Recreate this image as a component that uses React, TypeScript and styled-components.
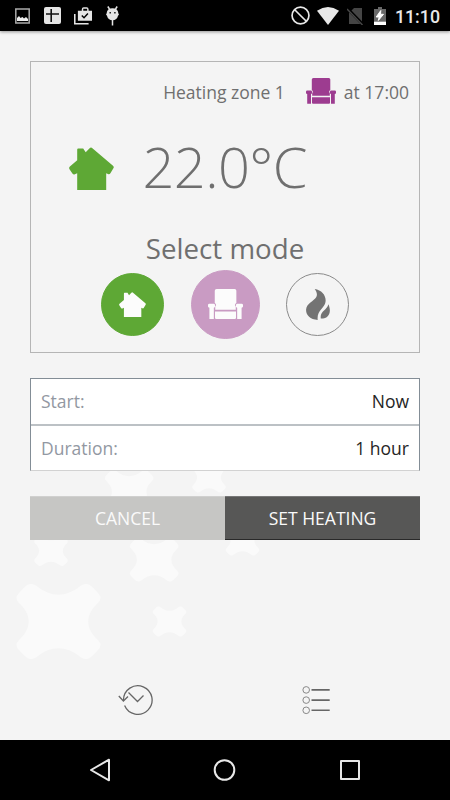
import React from 'react';
import styled, { createGlobalStyle } from 'styled-components';

const GlobalStyle = createGlobalStyle`
  * { box-sizing: border-box; }
  body { margin: 0; background: #f4f4f4; }
  svg { display: block; flex: none; }
  button { border: 0; padding: 0; margin: 0; font: inherit; background: none; }
`;

const Screen = styled.div`
  position: relative;
  isolation: isolate;
  width: 450px;
  height: 800px;
  overflow: hidden;
  display: flex;
  flex-direction: column;
  background: #f4f4f4;
  color: #6f6f6f;
  font-family: 'Open Sans', sans-serif;
`;

const Backdrop = styled.svg`
  position: absolute;
  inset: 0;
  z-index: -1;
`;

const StatusBar = styled.header`
  height: 31px;
  flex: none;
  display: flex;
  align-items: center;
  justify-content: space-between;
  padding: 0 10px 0 15px;
  background: #000;
  box-shadow: 0 1px 3px rgba(0, 0, 0, 0.4);
`;

const StatusGroup = styled.div<{ $gap: number }>`
  display: flex;
  align-items: center;
  gap: ${(p) => p.$gap}px;
`;

const Clock = styled.span`
  font: 500 17.8px/31px Roboto, sans-serif;
  color: #e8e8e8;
  padding-top: 2px;
  margin-left: -2px;
`;

const Content = styled.main`
  flex: 1;
  display: flex;
  flex-direction: column;
  padding: 30px 30px 0;
`;

const ZoneCard = styled.section`
  height: 292px;
  display: flex;
  flex-direction: column;
  border: 1px solid #b5b5b5;
`;

const ZoneHeader = styled.div`
  height: 59px;
  display: flex;
  align-items: center;
  justify-content: flex-end;
  padding-right: 10px;
  font-size: 17.5px;
  line-height: 24px;
`;

const HeaderIcon = styled.span`
  margin: -2px 8px 0 21px;
`;

const Reading = styled.div`
  height: 94px;
  display: flex;
  align-items: center;
  padding-left: 38px;
`;

const Temperature = styled.span`
  margin: -4px 0 0 28.5px;
  font-size: 56px;
  font-weight: 300;
  line-height: 76px;
  letter-spacing: -0.6px;
`;

const ModeTitle = styled.h2`
  margin: 13px 0 2px;
  height: 40px;
  text-align: center;
  font-size: 27.7px;
  font-weight: 400;
  line-height: 40px;
`;

const Modes = styled.div`
  display: flex;
  align-items: center;
  justify-content: center;
  gap: 26.5px;
`;

const ModeButton = styled.button<{ $size: number; $fill: string; $line?: string }>`
  width: ${(p) => p.$size}px;
  height: ${(p) => p.$size}px;
  display: flex;
  align-items: center;
  justify-content: center;
  border-radius: 50%;
  background: ${(p) => p.$fill};
  border: 1px solid ${(p) => p.$line ?? p.$fill};
`;

const Fields = styled.dl`
  height: 93px;
  margin: 25px 0 0;
  display: flex;
  flex-direction: column;
  background: #fff;
  border: 1px solid #838d96;
  border-bottom-color: #d2d2d2;
`;

const Field = styled.div`
  flex: 1;
  display: flex;
  align-items: center;
  justify-content: space-between;
  padding: 0 10px;
  font-size: 17.5px;
  line-height: 24px;

  & + & { border-top: 2px solid #bcc1c5; }
`;

const Label = styled.dt`
  color: #9298a2;
`;

const Value = styled.dd`
  margin: 0;
  color: #252525;
`;

const Actions = styled.div`
  height: 44px;
  margin-top: 25px;
  display: grid;
  grid-template-columns: 1fr 1fr;
`;

const ActionButton = styled.button<{ $primary?: boolean }>`
  font-size: 17.5px;
  line-height: 24px;
  color: #fafafa;
  background: ${(p) => (p.$primary ? '#575756' : '#c6c6c4')};
  border-top: 1px solid ${(p) => (p.$primary ? '#777' : '#d0d0cf')};
  border-bottom: 1px solid ${(p) => (p.$primary ? '#292929' : '#c6c6c4')};
`;

const Tabs = styled.nav`
  height: 80px;
  flex: none;
  display: flex;
  align-items: center;
  padding-left: 117.5px;
  gap: 149px;
`;

const SystemNav = styled.footer`
  height: 60px;
  flex: none;
  display: flex;
  align-items: center;
  justify-content: space-between;
  padding: 0 89px 0 87px;
  background: #000;
`;

const SPLASH =
  'M3 9Q10 1 13 .3Q17-.7 21 2.3C35 13.5 50 13.5 64 2.3Q68-.7 72 .3Q75 1 82 9Q87 14 82 19C69 31 69 44 82 56Q87 61 82 66Q75 74 72 74.7Q68 75.7 64 72.7C50 61.5 35 61.5 21 72.7Q17 75.7 13 74.7Q10 74 3 66Q-2 61 3 56C16 44 16 31 3 19Q-2 14 3 9Z';

const splashes = [
  { x: 16, y: 584, s: 1 },
  { x: 152.5, y: 606.5, s: 0.4 },
  { x: 129.5, y: 538, s: 0.58 },
  { x: 34, y: 536, s: 0.4 },
  { x: 225.5, y: 525.5, s: 0.4 },
  { x: 104.5, y: 470, s: 0.58 },
  { x: 192, y: 462.5, s: 0.4 },
];

const House = ({ width, color }: { width: number; color: string }) => (
  <svg width={width} height={(width * 43) / 45} viewBox="0 0 45 43" fill={color}>
    <path d="M8.2 2.4Q8.2 1.4 9.2 1.4H14.2L16.7 5.3L20.6 1.2Q22 0 23.4 1.2L44 18.7Q45.3 19.8 44.4 21.3L41.4 26.3Q40.5 27.8 39 27.1L37.2 26.2V43H8.2V26.2L5.9 27.3Q4.5 28 3.4 26.5L.5 22.2Q-.4 20.7.9 19.6L8.2 13.3Z" />
  </svg>
);

const Chair = ({ width, color }: { width: number; color: string }) => (
  <svg width={width} height={(width * 26) / 30} viewBox="0 0 30 26" fill={color}>
    <path d="M7.4 0H22.8Q24.3 0 24.3 1.5V12Q22.8 12.7 23.2 14.2L23.8 15V17.7H6.2V15L6.8 14.2Q7.2 12.7 5.8 12V1.5Q5.8 0 7.4 0Z" />
    <path d="M1.2 12.6H4.8Q6 12.6 6 13.7V15Q6 16 5 16V25.7H1.2V16Q0 16 0 15V13.7Q0 12.6 1.2 12.6ZM25.2 12.6H28.8Q30 12.6 30 13.7V15Q30 16 28.8 16V25.7H25V16Q24 16 24 15V13.7Q24 12.6 25.2 12.6Z" />
    <path d="M6 19.3H24V24.7Q24 25.7 23 25.7H7Q6 25.7 6 24.7Z" />
  </svg>
);

const Flame = () => (
  <svg width="24" height="32" viewBox="0 0 24 32" fill="#737373">
    <path d="M8.7 0C16 1 20.5 7 19.5 13C18.7 19 10.5 21.5 11.7 31C4 30.5-.2 26 .1 20.5C.4 14.5 8 12 10.3 8C11.8 5 10.3 2 8.7 0Z" />
    <path d="M22.4 15.3C24.5 20 24.6 25 21 27.9C19 29.5 16.5 29.6 14.8 29.5C13.7 22 21 21.5 22.4 15.3Z" />
  </svg>
);

export default function App() {
  return (
    <>
      <GlobalStyle />
      <Screen>
        <Backdrop width="450" height="800" fill="#fafafa">
          {splashes.map((p) => (
            <path key={`${p.x}-${p.y}`} d={SPLASH} transform={`translate(${p.x} ${p.y}) scale(${p.s})`} />
          ))}
        </Backdrop>

        <StatusBar>
          <StatusGroup $gap={13.5}>
            <svg width="15" height="16" viewBox="0 0 15 16">
              <path d="M.8 1H14.2V15H.8Z" fill="none" stroke="#aaa" strokeWidth="1.5" />
              <path d="M2 13V10L4 8L5.5 10L7.5 9L9 10.5L11 9L13 11V13Z" fill="#eee" />
            </svg>
            <svg width="17" height="17" viewBox="0 0 17 17">
              <rect width="17" height="17" rx="2" fill="#e5e5e5" />
              <path d="M7.2 2V15M2 7H15" stroke="#111" strokeWidth="1.6" />
            </svg>
            <svg width="18.5" height="18" viewBox="0 0 19 18">
              <path d="M4 3.5H8V2Q8 0 10 0H13Q15 0 15 2V3.5H18.5V14H4ZM9.5 3.5H13.5V1.5H9.5Z" fill="#e5e5e5" fillRule="evenodd" />
              <path d="M.8 7V17H15" fill="none" stroke="#e5e5e5" strokeWidth="1.6" />
              <path d="M8 8.5L10.3 10.8L14.3 6.5" fill="none" stroke="#000" strokeWidth="1.5" />
            </svg>
            <svg width="13" height="20" viewBox="0 0 13 20">
              <path d="M1.8.5L3.5 3M11.2.5L9.5 3M6.5 14V19.5" stroke="#e5e5e5" strokeWidth="1.5" />
              <path d="M.6 7.5Q1 2.3 6.5 2.3T12.4 7.5L13 8.5L12 9.8Q11 14.2 6.5 14.2T1 9.8L0 8.5Z" fill="#e5e5e5" />
              <path d="M3.5 6H4.9V7.4H3.5ZM8.2 6H9.6V7.4H8.2Z" fill="#111" />
            </svg>
          </StatusGroup>
          <StatusGroup $gap={7.5}>
            <svg width="19" height="19" viewBox="0 0 18 18" fill="none" stroke="#e8e8e8" strokeWidth="1.6">
              <circle cx="9" cy="9" r="8" />
              <path d="M3.3 3.3L14.7 14.7" />
            </svg>
            <svg width="22" height="18" viewBox="0 0 22 18">
              <path d="M0 3.7Q11-3.5 22 3.7L11 18Z" fill="#e8e8e8" />
            </svg>
            <svg width="17" height="18" viewBox="0 0 17 18">
              <path d="M7 1H15V17H2V6Z" fill="#454545" />
              <path d="M.5 1.5L16 17.5" stroke="#000" strokeWidth="3" />
              <path d="M0 2L15.5 18" stroke="#484848" strokeWidth="1.4" />
            </svg>
            <svg width="18" height="18" viewBox="1 0 18 18">
              <path d="M8 0H12V2H16V18H4V2H8Z" fill="#686868" />
              <path d="M4 14.7H16V18H4Z" fill="#fff" />
              <path d="M10.8 3.5L6.2 10H9.2L8.3 13.5L13.5 7.3H10.5Z" fill="#fff" stroke="#fff" />
            </svg>
            <Clock>11:10</Clock>
          </StatusGroup>
        </StatusBar>

        <Content>
          <ZoneCard>
            <ZoneHeader>
              <span>Heating zone 1</span>
              <HeaderIcon>
                <Chair width={30} color="#9d3c90" />
              </HeaderIcon>
              <span>at 17:00</span>
            </ZoneHeader>
            <Reading>
              <House width={45} color="#5ea835" />
              <Temperature>22.0°C</Temperature>
            </Reading>
            <ModeTitle>Select mode</ModeTitle>
            <Modes>
              <ModeButton $size={63} $fill="#5ea835" aria-label="Home">
                <House width={27} color="#fcfcfc" />
              </ModeButton>
              <ModeButton $size={69} $fill="#c99bc3" aria-label="Comfort">
                <Chair width={35} color="#fcfcfc" />
              </ModeButton>
              <ModeButton $size={63} $fill="transparent" $line="#8a8a8a" aria-label="Heat">
                <Flame />
              </ModeButton>
            </Modes>
          </ZoneCard>

          <Fields>
            <Field>
              <Label>Start:</Label>
              <Value>Now</Value>
            </Field>
            <Field>
              <Label>Duration:</Label>
              <Value>1 hour</Value>
            </Field>
          </Fields>

          <Actions>
            <ActionButton>CANCEL</ActionButton>
            <ActionButton $primary>SET HEATING</ActionButton>
          </Actions>
        </Content>

        <Tabs>
          <svg width="35" height="32" viewBox="0 0 35 32" fill="none" stroke="#666" strokeWidth="1.3">
            <path d="M5.5 16A14.3 14.3 0 1 1 6.6 21.5" />
            <path d="M.8 12L5.4 17L10 12.5M10.5 8.5L19.5 17.5L25.5 11.5" />
          </svg>
          <svg width="28" height="30" viewBox="0 0 28 30" fill="none">
            <g stroke="#888" strokeWidth="1">
              <circle cx="4.2" cy="4.9" r="3.3" />
              <circle cx="4.2" cy="15.1" r="3.3" />
              <circle cx="4.2" cy="25.3" r="3.3" />
            </g>
            <path d="M9.5 4.9H27.7M9.5 15.1H27.7M9.5 25.3H27.7" stroke="#666" strokeWidth="1.6" />
          </svg>
        </Tabs>

        <SystemNav>
          <svg width="24" height="24" viewBox="0 0 24 24" fill="none" stroke="#e8e8e8" strokeWidth="2" strokeLinejoin="round">
            <path d="M22 1.7V22.3L4 12Z" />
          </svg>
          <svg width="24" height="24" viewBox="0 0 24 24" fill="none" stroke="#e8e8e8" strokeWidth="2">
            <circle cx="11.5" cy="12" r="9.8" />
          </svg>
          <svg width="22" height="22" viewBox="0 0 22 22" fill="none" stroke="#e8e8e8" strokeWidth="2" strokeLinejoin="round">
            <path d="M2 2H20V20H2Z" />
          </svg>
        </SystemNav>
      </Screen>
    </>
  );
}
